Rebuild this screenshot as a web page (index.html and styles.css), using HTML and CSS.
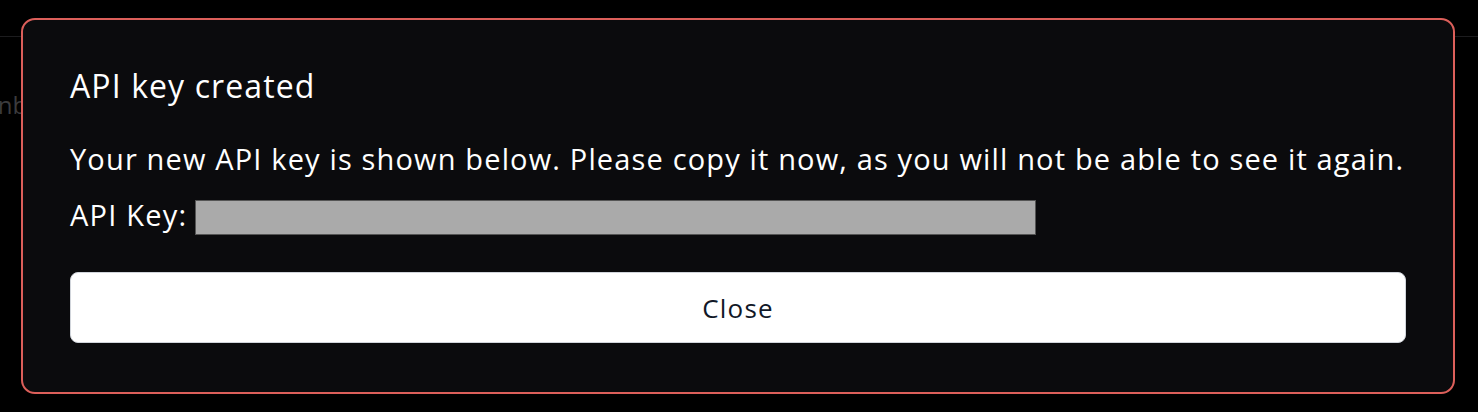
FILE: index.html
```html
<!DOCTYPE html>
<html lang="en">
<head>
    <meta charset="UTF-8">
    <meta name="viewport" content="width=device-width, initial-scale=1.0">
    <title>API keys</title>
    <link rel="stylesheet" href="styles.css">
</head>
<body>
    <!-- page behind the dialog -->
    <div class="topbar"></div>
    <div class="page">
        <p class="page-text">Inbox</p>
    </div>

    <!-- dialog shown after a key is made -->
    <div class="modal">
        <h2 class="modal-title">API key created</h2>
        <p class="modal-text">Your new API key is shown below. Please copy it now, as you will not be able to see it again.</p>
        <div class="key-row">
            <span class="key-label">API Key:</span>
            <span class="key-value"></span>
        </div>
        <button class="close-btn">Close</button>
    </div>
</body>
</html>
```

FILE: styles.css
```css
* {
    box-sizing: border-box;
}
body {
    margin: 0;
    background-color: #000;
    font-family: "Open Sans", "Liberation Sans", sans-serif;
    color: #fff;
    height: 412px;
    overflow: hidden;
    position: relative;
}
.topbar {
    height: 37px;
    border-bottom: 1px solid #1c1c1e;
}
.page {
    width: 21px; /* the rest sits under the dialog */
    overflow: hidden;
}
.page-text {
    margin: 56px 0 0 -9px;
    font-size: 24px;
    line-height: 24px;
    white-space: nowrap;
    color: #3b3b3d;
}
.modal {
    position: absolute;
    left: 21px;
    top: 18px;
    width: 1434px;
    height: 376px;
    padding: 47px 47px 47px;
    border: 2px solid #dc5f5a;
    border-radius: 14px;
    background-color: #0b0b0d;
    display: flex;
    flex-direction: column;
}
.modal-title {
    margin: 0;
    font-size: 32px;
    font-weight: 500;
    line-height: 38px;
    letter-spacing: 1.1px;
}
.modal-text {
    margin: 36px 0 0;
    font-size: 29px;
    line-height: 36px;
    letter-spacing: 1.15px;
    white-space: nowrap;
}
.key-row {
    margin-top: 23px;
    display: flex;
    align-items: flex-start;
    gap: 8px;
    font-size: 29px;
    letter-spacing: 1.2px;
}
.key-label {
    line-height: 30px;
}
.key-value {
    display: inline-block;
    width: 841px;
    height: 35px;
    background-color: #aaaaaa;
    border: 1px solid #555;
}
.close-btn {
    margin-top: 37px;
    height: 71px;
    width: 100%;
    flex-shrink: 0;
    background-color: #fff;
    border: 1px solid #d1d5db;
    border-radius: 8px;
    font-family: inherit;
    font-size: 26px;
    letter-spacing: 1.2px;
    color: #111827;
    cursor: pointer;
}
.close-btn:hover {
    background-color: #f3f4f6;
}
```
